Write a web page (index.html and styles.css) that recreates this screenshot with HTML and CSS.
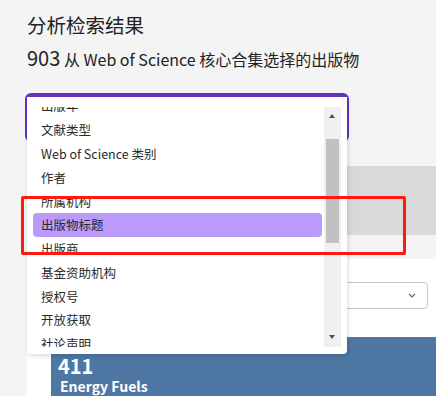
FILE: index.html
```html
<!DOCTYPE html>
<html lang="zh">
<head>
<meta charset="utf-8">
<link rel="stylesheet" href="styles.css">
</head>
<body>
<div class="page">
  <h1 class="title">分析检索结果</h1>
  <p class="subtitle"><span class="count">903</span> 从 Web of Science 核心合集选择的出版物</p>
  <div class="field"></div>
  <div class="band"></div>
  <div class="card">
    <div class="select-row">
      <div class="select"><span class="select-text">10</span>
        <svg class="chev" width="8" height="5" viewBox="0 0 8 5"><path d="M1 1 L4 4 L7 1" fill="none" stroke="#666" stroke-width="1.2"/></svg>
      </div>
    </div>
    <div class="tile">
      <div class="tile-num">411</div>
      <div class="tile-name">Energy Fuels</div>
    </div>
  </div>
</div>

<div class="listbox">
  <div class="viewport">
    <ul class="options">
      <li class="opt">出版年</li>
      <li class="opt">文献类型</li>
      <li class="opt">Web of Science 类别</li>
      <li class="opt">作者</li>
      <li class="opt">所属机构</li>
      <li class="opt opt-active">出版物标题</li>
      <li class="opt">出版商</li>
      <li class="opt">基金资助机构</li>
      <li class="opt">授权号</li>
      <li class="opt">开放获取</li>
      <li class="opt">社论声明</li>
    </ul>
  </div>
  <div class="scrollbar">
    <div class="arrow arrow-up"></div>
    <div class="thumb"></div>
    <div class="arrow arrow-down"></div>
  </div>
</div>

<div class="annot"></div>
</body>
</html>
```

FILE: styles.css
```css
* { box-sizing: border-box; }
html, body {
  margin: 0;
  padding: 0;
  background: #f4f4f4;
  font-family: "Noto Sans CJK SC", "Noto Sans", sans-serif;
  color: #333;
  overflow: hidden;
  height: 396px;
}
.page {
  padding: 11px 0 0 27px;
}
.title {
  margin: 0;
  font-size: 19.5px;
  line-height: 28px;
  font-weight: 400;
  color: #222;
}
.subtitle {
  margin: 6px 0 0 0;
  font-size: 16px;
  line-height: 26px;
  color: #222;
}
.count {
  font-size: 20px;
}
.field {
  margin: 21px 0 0 -2px;
  width: 324px;
  height: 49px;
  border: 2px solid #6236c0;
  border-top-width: 4px;
  border-radius: 6px;
  background: #fff;
}
.band {
  margin-top: 24px;
  height: 69px;
  background: #d9d9d9;
}
.card {
  margin-top: 24px;
  background: #fff;
  padding-top: 23px;
  height: 200px;
}
.select-row {
  display: flex;
  justify-content: flex-end;
  padding-right: 8px;
}
.select {
  width: 110px;
  height: 27px;
  border: 1.5px solid #c6c6c6;
  border-radius: 4px;
  display: flex;
  align-items: center;
  justify-content: space-between;
  padding: 0 11px 0 7px;
  font-size: 13px;
  color: #1d4c8c;
}
.chev { display: block; }
.tile {
  margin: 28px 0 0 24px;
  height: 80px;
  background: #4e77a3;
  color: #fff;
  padding: 17px 0 0 7px;
  font-weight: 700;
}
.tile-num {
  font-size: 20px;
  line-height: 24px;
}
.tile-name {
  font-size: 14px;
  line-height: 16px;
  margin-left: 2px;
}

.listbox {
  position: absolute;
  left: 27px;
  top: 97px;
  width: 320px;
  height: 257px;
  background: #fff;
  border-radius: 0 0 4px 4px;
  box-shadow: 1px 2px 5px rgba(0,0,0,0.14);
}
.viewport {
  position: absolute;
  left: 6px;
  top: 10px;
  width: 289px;
  height: 240px;
  overflow: hidden;
}
.options {
  list-style: none;
  margin: -12.7px 0 0 0;
  padding: 0;
}
.opt {
  height: 23.8px;
  line-height: 23.8px;
  padding-left: 8px;
  font-size: 12.5px;
  color: #2a2a2a;
  white-space: nowrap;
  border-radius: 4px;
}
.opt-active {
  background: #bc9afc;
}
.scrollbar {
  position: absolute;
  left: 297px;
  top: 10px;
  width: 17px;
  height: 240px;
  background: #f0f0f0;
}
.arrow {
  position: absolute;
  left: 5px;
  width: 0;
  height: 0;
  border-left: 3.5px solid transparent;
  border-right: 3.5px solid transparent;
}
.arrow-up {
  top: 7px;
  border-bottom: 4px solid #505050;
}
.arrow-down {
  bottom: 8px;
  border-top: 4px solid #505050;
}
.thumb {
  position: absolute;
  left: 2px;
  top: 32px;
  width: 13px;
  height: 104px;
  background: #c1c1c1;
}
.annot {
  position: absolute;
  left: 21px;
  top: 196px;
  width: 385px;
  height: 59px;
  border: 3px solid #ff1a10;
  border-radius: 2px;
}
```
